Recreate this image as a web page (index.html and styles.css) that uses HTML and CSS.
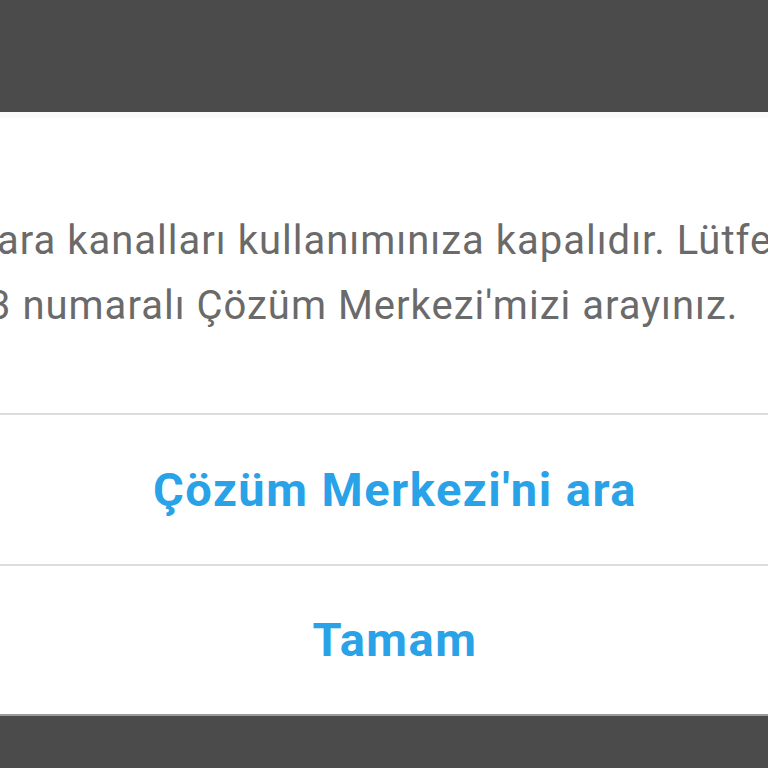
FILE: index.html
```html
<!DOCTYPE html>
<html lang="tr">
<head>
    <meta charset="UTF-8">
    <meta name="viewport" content="width=device-width, initial-scale=1.0">
    <title>Uyarı</title>
    <link rel="stylesheet" href="styles.css">
</head>
<body>
    <div class="screen">
        <div class="dialog">
            <div class="dialog-message">
                <div class="msg-line line-1">ara kanalları kullanımınıza kapalıdır. Lütfen</div>
                <div class="msg-line line-2">3 numaralı Çözüm Merkezi'mizi arayınız.</div>
            </div>
            <button class="dialog-btn">Çözüm Merkezi'ni ara</button>
            <button class="dialog-btn">Tamam</button>
        </div>
    </div>
</body>
</html>
```

FILE: styles.css
```css
html, body {
    margin: 0;
    padding: 0;
    height: 100%;
}
body {
    background: #4b4b4b;
    font-family: Roboto, "Liberation Sans", sans-serif;
    overflow: hidden;
}
.screen {
    padding-top: 112px;
}
.dialog {
    background: #fff;
    height: 604px;
    display: flex;
    flex-direction: column;
    border-top: 6px solid #fafafa;
    border-bottom: 2px solid #9a9a9a;
    box-sizing: border-box;
}
.dialog-message {
    height: 297px;
    box-sizing: border-box;
    padding-top: 90px;
    overflow: hidden;
    border-bottom: 2px solid #dcdcdc;
    color: #6a6a6a;
    font-size: 40px;
    letter-spacing: 1px;
    line-height: 65px;
}
.msg-line {
    white-space: nowrap;
}
.line-1 {
    margin-left: -3px;
}
.line-2 {
    margin-left: -12px;
}
.dialog-btn {
    flex: 1;
    border: none;
    background: #fff;
    color: #29a2e8;
    font-family: inherit;
    font-weight: bold;
    font-size: 47px;
    letter-spacing: 1.5px;
    padding: 0 0 0 22px;
    cursor: pointer;
}
.dialog-btn + .dialog-btn {
    border-top: 2px solid #dcdcdc;
}
```
